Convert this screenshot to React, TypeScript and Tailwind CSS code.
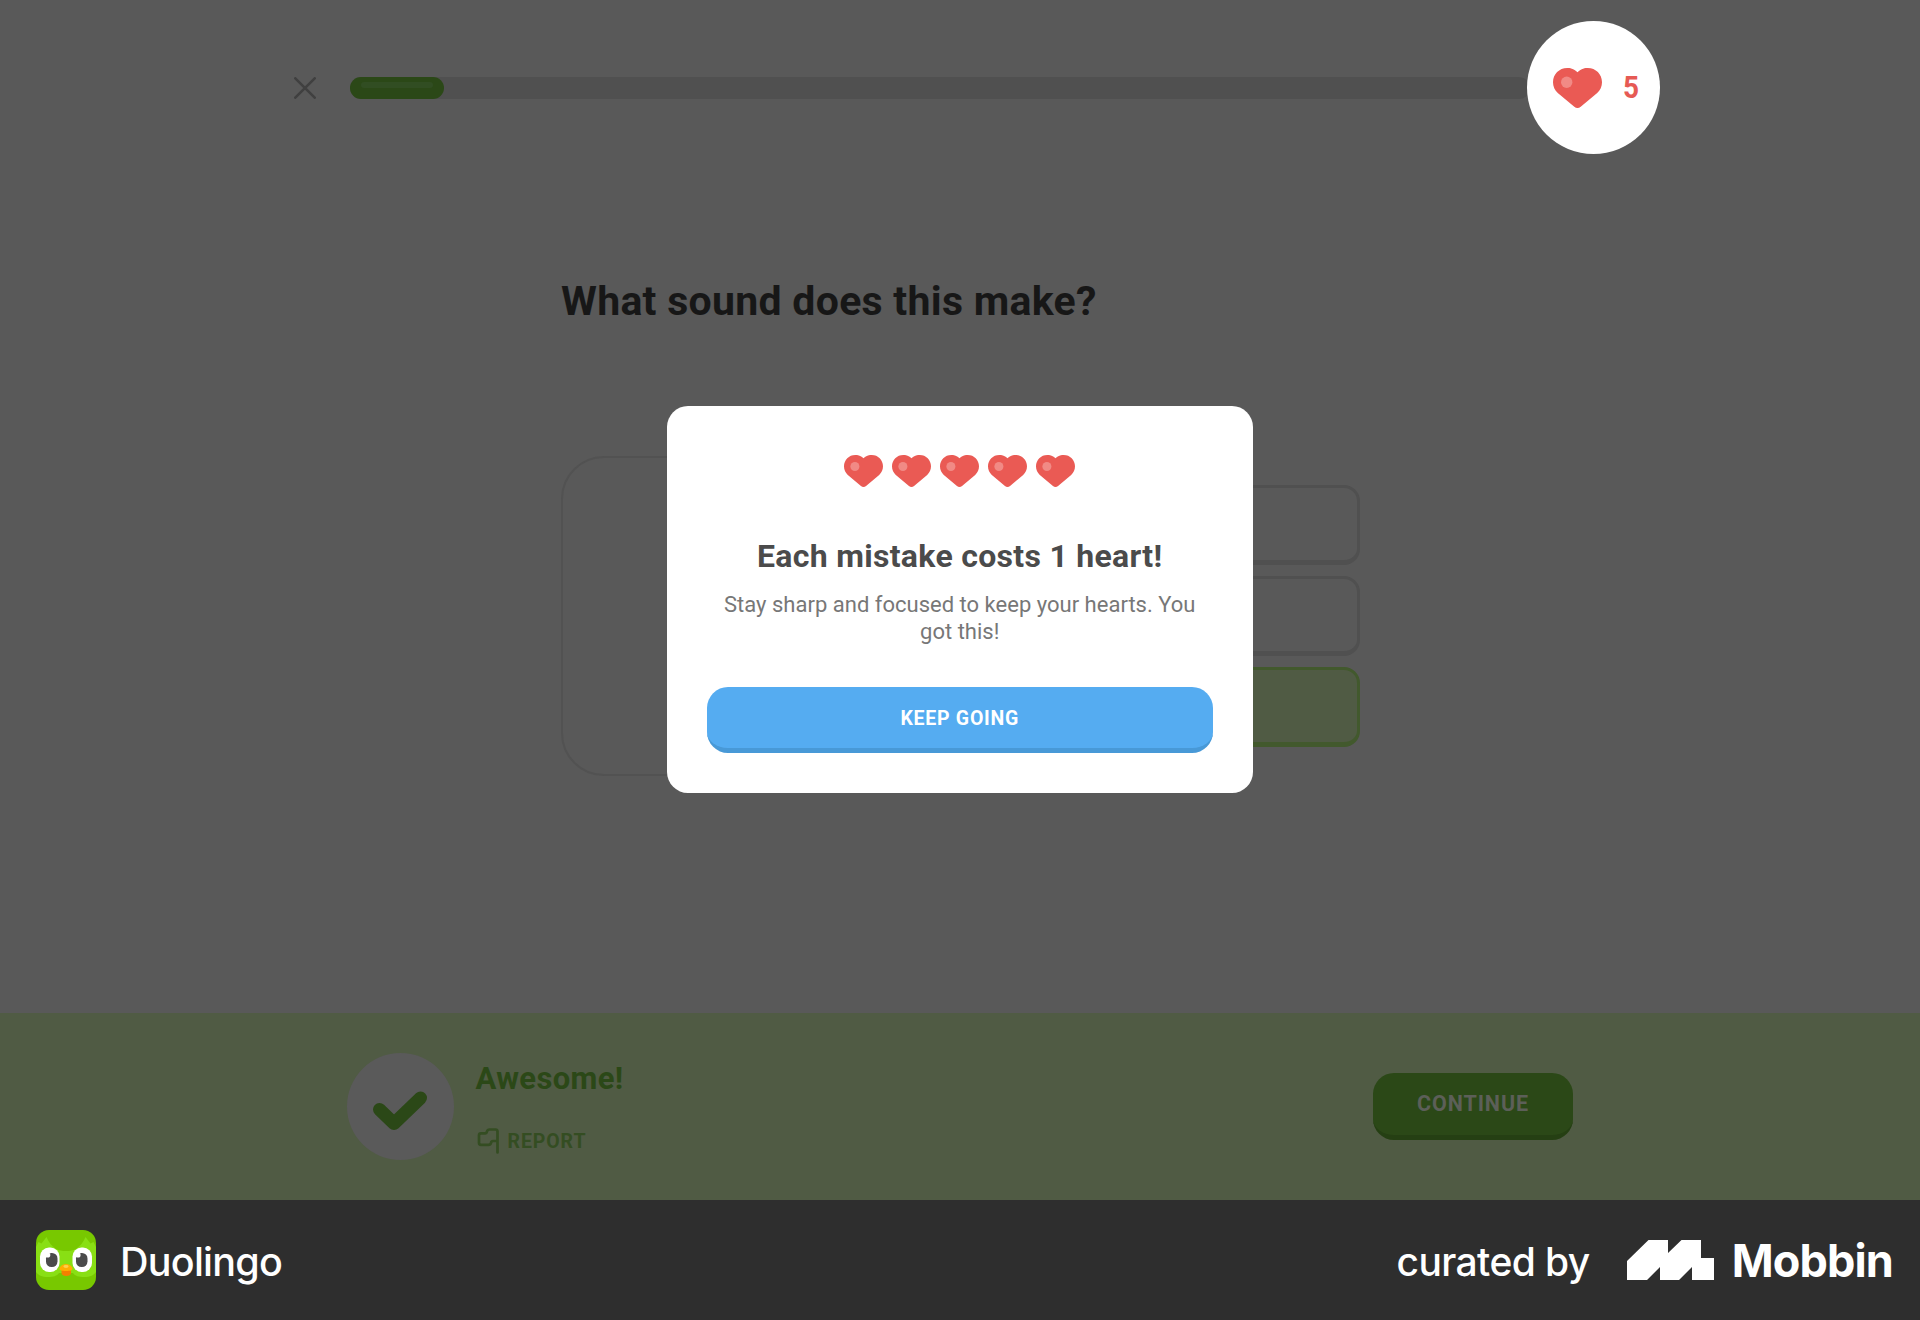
import React from "react";

function Heart({ className }: { className: string }) {
  return (
    <svg viewBox="0 0 49 40" className={className} preserveAspectRatio="none">
      <path
        d="M24.5 4.2C20.6.3 16.8 0 14.2 0 6.2 0 0 6.2 0 14.2c0 4.3 1.7 8 4.8 10.9l16.5 13.6c1.900 1.700 4.500 1.700 6.400 0l16.500-13.600c3.100-2.900 4.800-6.600 4.800-10.900C49 6.200 42.800 0 34.800 0c-2.600 0-6.400.3-10.300 4.200z"
        fill="#ea5a54"
      />
      <circle cx="13.700" cy="14.300" r="5.700" fill="#f18a85" />
    </svg>
  );
}

function DuoIcon() {
  return (
    <svg viewBox="0 0 60 60" className="size-[60px] shrink-0">
      <defs>
        <clipPath id="duo">
          <rect width="60" height="60" rx="13" />
        </clipPath>
      </defs>
      <g clipPath="url(#duo)">
        <rect width="60" height="60" fill="#78c800" />
        <path
          d="M0 17l2.500-5 3 1.500L10.500 7c2 5 5 9 9.500 12 3 1.500 6 2 10 2s7-.5 10-2c4.500-3 7.500-7 9.500-12l5 6.500 3-1.500L60 17v25c-2 3-6 5-12 5-5 0-9-1-11-4H23c-2 3-6 4-11 4-6 0-10-2-12-5z"
          fill="#89df14"
        />
        <rect x="4" y="17.500" width="19.500" height="24.500" rx="9" fill="#fff" />
        <rect x="36.500" y="17.500" width="19.500" height="24.500" rx="9" fill="#fff" />
        <rect x="10" y="23" width="11.500" height="14" rx="5.500" fill="#4b4b4b" />
        <rect x="40" y="23" width="11.500" height="14" rx="5.500" fill="#4b4b4b" />
        <circle cx="11.700" cy="25" r="2.600" fill="#fff" />
        <circle cx="42" cy="25" r="2.600" fill="#fff" />
        <path d="M25.500 40h9.500v3c0 2-2 3-4.700 3s-4.800-1-4.800-3z" fill="#f47f00" />
        <path d="M30 34c4 0 6.500 3 6.500 4.800S34 41 30 41s-6.500-.4-6.500-2.200S26 34 30 34z" fill="#ffaf00" />
        <ellipse cx="30" cy="36.500" rx="2.600" ry="1.400" fill="#ffd04d" />
      </g>
    </svg>
  );
}

function Choice({ correct = false }: { correct?: boolean }) {
  return (
    <div
      className={
        correct
          ? "h-20 rounded-2xl border-[3px] border-b-[5px] border-[#42592d] bg-[#505b44]"
          : "h-20 rounded-2xl border-[3px] border-b-[5px] border-[#505050] bg-[#595959]"
      }
    />
  );
}

export default function App() {
  return (
    <div className="relative flex h-[1320px] w-[1920px] flex-col overflow-hidden bg-[#595959] font-['Roboto',sans-serif]">
      <header className="flex h-44 shrink-0 items-center pl-[294px]">
        <svg viewBox="0 0 22 22" className="size-[22px] shrink-0" stroke="#404040" strokeWidth="2.6" strokeLinecap="round">
          <path d="M1.300 1.300l19.400 19.400M20.700 1.300L1.300 20.700" />
        </svg>
        <div className="ml-[33.500px] h-[21.500px] w-[1180px] rounded-full bg-[#505050]">
          <div className="h-full w-[94.500px] rounded-full bg-[#2b4817] px-[11px] pt-[5px]">
            <div className="h-[6px] rounded-full bg-[#314d22]" />
          </div>
        </div>
        <div className="-mt-px -ml-[2.500px] flex size-[133px] shrink-0 items-center rounded-full bg-white pl-[26px]">
          <Heart className="h-10 w-[49px]" />
          <span className="ml-[21px] origin-left scale-x-90 text-[31px] leading-none font-bold text-[#e65a54]">5</span>
        </div>
      </header>

      <main className="flex h-[837px] shrink-0 flex-col px-[561px]">
        <h1 className="pt-[105px] text-[41px] leading-[40px] font-bold tracking-[0.28px] whitespace-nowrap text-[#171717]">
          What sound does this make?
        </h1>
        <div className="mt-[135px] -mr-px flex h-[320px] items-center justify-between">
          <div className="h-full w-[320px] rounded-[43px] border-[2.67px] border-[#525252]" />
          <div className="flex w-[426px] flex-col gap-[10.67px]">
            <Choice />
            <Choice />
            <Choice correct />
          </div>
        </div>
      </main>

      <footer className="flex h-[187px] shrink-0 items-center justify-between bg-[#505b44] px-[347px]">
        <div className="flex">
          <div className="flex size-[106.500px] items-center justify-center rounded-full bg-[#5a5a5a]">
            <svg
              viewBox="0 0 56 40"
              className="mt-[6px] mr-px h-10 w-14"
              fill="none"
              stroke="#2b4817"
              strokeWidth="13"
              strokeLinecap="round"
              strokeLinejoin="round"
            >
              <path d="M7.500 19.500L22 33.500 48.500 8" />
            </svg>
          </div>
          <div className="ml-[22px] flex flex-col pt-[10px]">
            <div className="text-[31px] leading-[31px] font-bold tracking-[0.350px] text-[#2b4817]">Awesome!</div>
            <div className="mt-[34px] flex items-start text-[#344d22]">
              <svg
                viewBox="0 0 23 26"
                className="ml-px h-[26px] w-[23px]"
                fill="none"
                stroke="currentColor"
                strokeWidth="2.700"
                strokeLinejoin="round"
                strokeLinecap="round"
              >
                <path d="M20.500 24.500V3.500q0-2-2-2h-6q-2 0-2.500 2-.4 1.800-2 1.800H4q-2 0-2 2v7.500q0 2 2 2h7.500q2 0 2.500-2 .4-1.800 2-1.800h4.500" />
              </svg>
              <span className="ml-[8px] pt-[3px] text-[19.500px] leading-[22px] font-bold tracking-[0.9px]">REPORT</span>
            </div>
          </div>
        </div>
        <button className="h-[67px] w-[200px] rounded-[21px] border-b-[5px] border-[#253f13] bg-[#2b4817] pt-[1px] text-[21.500px] font-bold tracking-[0.9px] text-[#5c5f58]">
          CONTINUE
        </button>
      </footer>

      <div className="flex h-[120px] shrink-0 items-center justify-between bg-[#2e2e2e] pr-[27px] pl-9 font-['Inter',sans-serif] text-white">
        <div className="flex items-center">
          <DuoIcon />
          <span className="ml-6 pt-[3px] text-[39.500px] leading-[48px] font-medium tracking-[-0.750px]">Duolingo</span>
        </div>
        <div className="flex items-center">
          <span className="pt-[3px] text-[39px] leading-[48px] font-medium tracking-[-0.6px]">curated by</span>
          <svg viewBox="0 0 87 40" className="ml-[37px] h-10 w-[87px]" fill="#fff">
            <path d="M0 21L21.500 0H41v13L54.500 0H74v18h13v22H65V27L52 40H33V27L20 40H0z" />
          </svg>
          <span className="ml-[18px] pt-[1px] text-[45px] leading-[48px] font-bold tracking-[-0.850px]">Mobbin</span>
        </div>
      </div>

      <div className="absolute top-[406px] left-[666.500px] flex h-[387px] w-[586.500px] flex-col items-center rounded-[21px] bg-white px-10">
        <div className="mt-[49px] flex gap-[9px]">
          {[0, 1, 2, 3, 4].map((i) => (
            <Heart key={i} className="h-8 w-[39px]" />
          ))}
        </div>
        <h2 className="mt-[51px] text-[32px] leading-[36px] font-bold tracking-[0.3px] whitespace-nowrap text-[#4b4b4b]">
          Each mistake costs 1 heart!
        </h2>
        <p className="mt-[17px] text-center text-[22px] leading-[27px] tracking-[0.01px] whitespace-nowrap text-[#777]">
          Stay sharp and focused to keep your hearts. You
          <br />
          got this!
        </p>
        <button className="mt-auto mb-10 h-[66px] w-full rounded-[21px] border-b-[5px] border-[#4899d7] bg-[#55acf1] pt-[2px] text-[19.500px] font-bold tracking-[0.750px] text-white">
          KEEP GOING
        </button>
      </div>
    </div>
  );
}
